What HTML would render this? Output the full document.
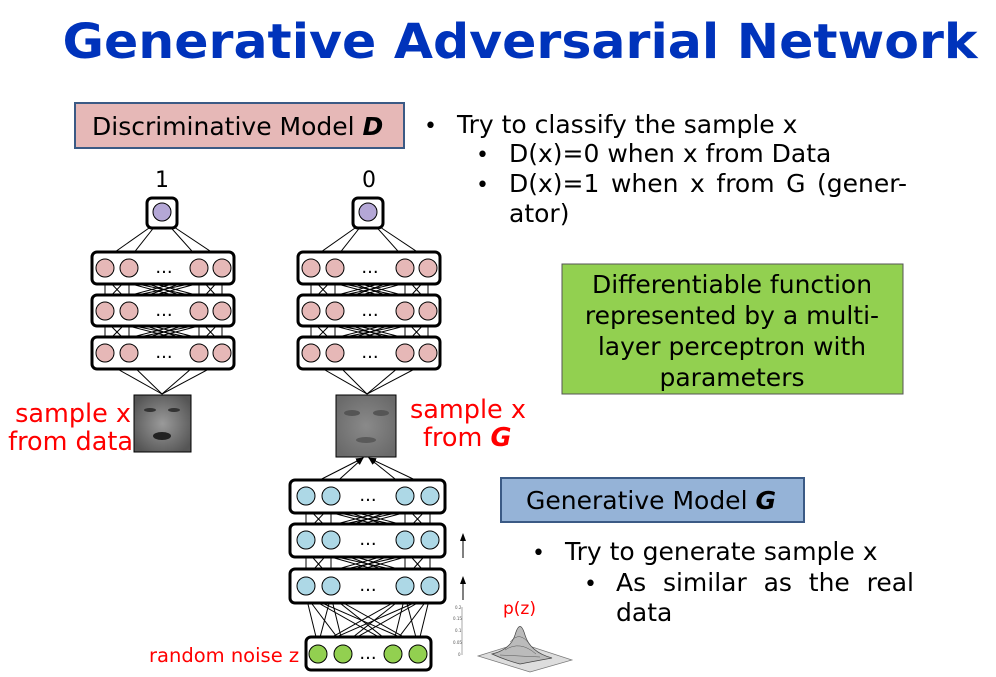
<!DOCTYPE html>
<html><head><meta charset="utf-8"><style>
html,body{margin:0;padding:0;background:#fff;}
svg{display:block;font-family:"DejaVu Sans","Liberation Sans",sans-serif;}
</style></head><body>
<svg id="s" width="996" height="677" viewBox="0 0 996 677" xmlns="http://www.w3.org/2000/svg">
<defs>
<marker id="ar" markerWidth="8" markerHeight="8" refX="7" refY="4" orient="auto" markerUnits="userSpaceOnUse"><path d="M0,1 L8,4 L0,7 z" fill="#000"/></marker>
<radialGradient id="fg" cx="0.5" cy="0.5" r="0.6"><stop offset="0" stop-color="#9a9a9a"/><stop offset="1" stop-color="#555"/></radialGradient>
<radialGradient id="fg2" cx="0.5" cy="0.5" r="0.6"><stop offset="0" stop-color="#8a8a8a"/><stop offset="1" stop-color="#6a6a6a"/></radialGradient>
</defs>
<text x="520" y="58" text-anchor="middle" font-size="48" font-weight="bold" fill="#0033bb" textLength="915" lengthAdjust="spacingAndGlyphs">Generative Adversarial Network</text>

<rect x="75" y="103" width="329" height="45" fill="#e6b8b7" stroke="#3b5a85" stroke-width="2"/>
<text x="92" y="135" font-size="25">Discriminative Model <tspan font-weight="bold" font-style="italic">D</tspan></text>

<g font-size="25">
<text x="424" y="133" font-size="22">•</text><text x="457" y="133">Try to classify the sample x</text>
<text x="476" y="162" font-size="22">•</text><text x="509" y="162">D(x)=0 when x from Data</text>
<text x="476" y="192" font-size="22">•</text><text class="j" data-w="398" x="509" y="192">D(x)=1 when x from G (gener-</text>
<text x="509" y="222">ator)</text>
</g>

<rect x="562" y="264" width="341" height="130" fill="#92d050" stroke="#555" stroke-width="1"/>
<g font-size="25" text-anchor="middle">
<text x="732" y="293">Differentiable function</text>
<text x="732" y="324">represented by a multi-</text>
<text x="732" y="355">layer perceptron with</text>
<text x="732" y="386">parameters</text>
</g>

<rect x="501" y="478" width="303" height="44" fill="#95b3d7" stroke="#3b5a85" stroke-width="2"/>
<text x="526" y="509" font-size="25">Generative Model <tspan font-weight="bold" font-style="italic">G</tspan></text>

<g font-size="25">
<text x="532" y="560" font-size="22">•</text><text x="565" y="560">Try to generate sample x</text>
<text x="584" y="591" font-size="22">•</text><text class="j" data-w="298" x="616" y="591">As similar as the real</text>
<text x="616" y="621">data</text>
</g>

<text x="162" y="187" font-size="22" text-anchor="middle">1</text>
<text x="369" y="187" font-size="22" text-anchor="middle">0</text>

<g fill="#ff0000" font-size="25.5">
<text x="131" y="422" text-anchor="end">sample x</text>
<text x="133" y="450" text-anchor="end">from data</text>
<text x="410" y="418">sample x</text>
<text x="423" y="446">from <tspan font-weight="bold" font-style="italic">G</tspan></text>
<text x="149" y="662" font-size="19.5">random noise z</text>
<text x="503" y="614" font-size="17">p(z)</text>
</g>

<g id="net"></g>

<rect x="134" y="395" width="57" height="57" fill="url(#fg)" stroke="#000"/>
<ellipse cx="150" cy="410" rx="6" ry="2" fill="#333"/><ellipse cx="174" cy="410" rx="6" ry="2" fill="#333"/>
<ellipse cx="162" cy="436" rx="9" ry="4" fill="#222"/>
<rect x="336" y="395" width="60" height="62" fill="url(#fg2)" stroke="#000"/>
<ellipse cx="352" cy="413" rx="8" ry="3" fill="#555"/><ellipse cx="381" cy="413" rx="8" ry="3" fill="#555"/>
<ellipse cx="366" cy="440" rx="10" ry="3" fill="#5a5a5a"/>

<line x1="463" y1="558" x2="463" y2="534" stroke="#000" marker-end="url(#ar)"/>
<line x1="463" y1="600" x2="463" y2="577" stroke="#000" marker-end="url(#ar)"/>

<g font-size="4" fill="#555">
<line x1="462" y1="607" x2="462" y2="655" stroke="#555" stroke-width="0.5"/>
<text x="455" y="609">0.2</text><text x="453" y="620">0.15</text><text x="455" y="632">0.1</text><text x="453" y="644">0.05</text><text x="458" y="656">0</text>
</g>
<path d="M478,656 L520,643 L572,660 L530,672 Z" fill="#ddd" stroke="#777" stroke-width="0.7"/>
<path d="M492,654 Q510,650 515,635 Q520,618 525,635 Q530,652 552,658 Q530,662 520,664 Q505,660 492,654 Z" fill="#bbb" stroke="#444" stroke-width="0.7"/>
<path d="M505,650 Q520,640 536,654 M510,642 Q520,630 530,645 M500,655 L540,657" stroke="#555" stroke-width="0.5" fill="none"/>
</svg>
<script>
var NS="http://www.w3.org/2000/svg",g=document.getElementById("net");
function el(t,a){var e=document.createElementNS(NS,t);for(var k in a)e.setAttribute(k,a[k]);g.appendChild(e);return e;}
function line(x1,y1,x2,y2,arrow){var a={x1:x1,y1:y1,x2:x2,y2:y2,stroke:"#000","stroke-width":1};if(arrow)a["marker-end"]="url(#ar)";el("line",a);}
function conn(xs1,y1,xs2,y2){xs1.forEach(function(a){xs2.forEach(function(b){line(a,y1,b,y2,true);});});}
function layer(bx,by,bw,bh,xs,cy,fill){
 el("rect",{x:bx,y:by,width:bw,height:bh,rx:5,fill:"#fff",stroke:"#000","stroke-width":3});
 xs.forEach(function(x){el("circle",{cx:x,cy:cy,r:9,fill:fill,stroke:"#000","stroke-width":1});});
 var t=el("text",{x:(xs[1]+xs[2])/2,y:cy+5,"font-size":18,"text-anchor":"middle"});t.textContent="...";
}
function disc(off){
 var xs=[105+off,129+off,199+off,222+off];
 var img=off?[367,394]:[162,394];
 xs.forEach(function(x){line(img[0],img[1],x,362,true);});
 conn(xs,344,xs,320);conn(xs,302,xs,277);
 xs.forEach(function(x){line(x,259,162+off+(x<165+off?-3:3),221,true);});
 layer(92+off,252,142,32,xs,268,"#e6b8b7");
 layer(92+off,295,142,31,xs,311,"#e6b8b7");
 layer(92+off,337,142,32,xs,353,"#e6b8b7");
 el("rect",{x:147+off,y:198,width:30,height:30,rx:5,fill:"#fff",stroke:"#000","stroke-width":3});
 el("circle",{cx:162+off,cy:212,r:9,fill:"#b4a7d6",stroke:"#000"});
}
disc(0);disc(206);
var gx=[306,331,405,430],nx=[318,343,393,418];
gx.forEach(function(x){line(x,487,366+(x<368?-3:3),458,true);});
conn(gx,532,gx,506);conn(gx,578,gx,550);conn(nx,645,gx,596);
layer(290,480,155,33,gx,496,"#add8e6");
layer(290,524,155,33,gx,540,"#add8e6");
layer(290,569,155,34,gx,586,"#add8e6");
layer(306,637,125,33,nx,654,"#92d050");
// justify lines via word-spacing
document.querySelectorAll("text.j").forEach(function(t){
 var w=+t.getAttribute("data-w"),cur=t.getComputedTextLength(),n=(t.textContent.match(/ /g)||[]).length;
 if(n&&cur<w)t.setAttribute("word-spacing",((w-cur)/n).toFixed(2));
});
</script>
</body></html>
